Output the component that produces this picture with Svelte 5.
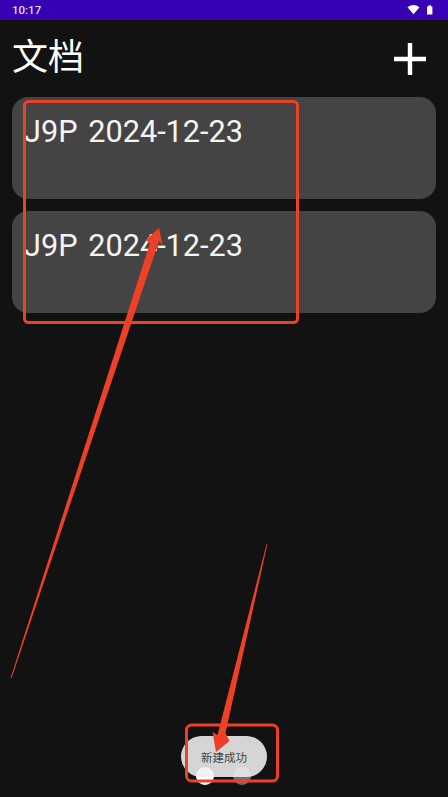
<script>
  const docs = ['J9P 2024-12-23', 'J9P 2024-12-23'];
</script>

<div class="screen">
  <div class="statusbar">
    <span class="time">10:17</span>
    <svg class="status-icons" width="30" height="12" viewBox="0 0 30 12">
      <path d="M0.5 3.2 Q6.5 -1 12.5 3.2 L6.5 10.2 Z" fill="#fff" />
      <path d="M20 2.5 h1.5 v-1.2 h2.4 v1.2 h1.5 v8 h-5.4 Z" fill="#fff" />
    </svg>
  </div>

  <header class="topbar">
    <h1>文档</h1>
    <svg class="add" width="32" height="32" viewBox="0 0 32 32">
      <path d="M13.8 0 h4.4 v13.8 h13.8 v4.4 h-13.8 v13.8 h-4.4 v-13.8 h-13.8 v-4.4 h13.8 Z" fill="#fff" />
    </svg>
  </header>

  <div class="list">
    {#each docs as doc}
      <div class="card"><span>{doc}</span></div>
    {/each}
  </div>

  <div class="dots">
    <span class="dot on"></span>
    <span class="dot"></span>
  </div>
  <div class="toast">新建成功</div>

  <svg class="marks" width="448" height="797" viewBox="0 0 448 797">
    <rect x="24.5" y="101.5" width="273" height="221" rx="4" fill="none" stroke="#ee4026" stroke-width="3" />
    <rect x="186.5" y="725" width="91" height="56" rx="5" fill="none" stroke="#ee4026" stroke-width="3" />
    <path d="M10.6 678 L150 243 L145.5 240 L159 228 L162.5 245 L159 241 L11.6 678 Z" fill="#ee4026" />
    <path d="M266.6 544 L217.5 735 L212.5 732 L216 752 L229.5 741 L225.5 733 L267.4 544 Z" fill="#ee4026" />
  </svg>
</div>

<style>
  :global(body) {
    margin: 0;
    background: #121212;
  }

  .screen {
    position: relative;
    width: 448px;
    height: 797px;
    overflow: hidden;
    background: #121212;
    font-family: Roboto, "Noto Sans CJK SC", sans-serif;
    color: #fff;
  }

  .statusbar {
    height: 20px;
    padding: 0 12px;
    display: flex;
    align-items: center;
    justify-content: space-between;
    background: #3700b3;
  }

  .time {
    font-size: 11.5px;
    font-weight: 500;
    color: #e6def5;
  }

  .status-icons {
    margin-right: -1px;
  }

  .topbar {
    height: 77px;
    padding: 0 22px 0 12px;
    display: flex;
    align-items: center;
    justify-content: space-between;
  }

  .add {
    margin-top: 1px;
  }

  h1 {
    margin: 0 0 2px;
    font-size: 36px;
    font-weight: 400;
    line-height: 40px;
  }

  .list {
    padding: 0 12px;
    display: flex;
    flex-direction: column;
    gap: 12px;
  }

  .card {
    height: 102px;
    box-sizing: border-box;
    padding: 16px 12px;
    border-radius: 16px;
    background: #444;
    font-size: 30.7px;
    font-weight: 400;
    line-height: 38px;
    word-spacing: 3px;
    white-space: nowrap;
    color: #f4f4f4;
  }

  .dots {
    position: absolute;
    left: 196px;
    top: 767px;
    display: flex;
    gap: 19px;
  }

  .dot {
    width: 18px;
    height: 18px;
    border-radius: 50%;
    background: #6e6e6e;
  }

  .dot.on {
    background: #fff;
  }

  .toast {
    position: absolute;
    left: 181px;
    top: 736px;
    width: 86px;
    height: 41px;
    display: flex;
    align-items: center;
    justify-content: center;
    border-radius: 21px;
    background: rgba(240, 240, 240, 0.88);
    color: #444;
    font-size: 11.5px;
  }

  .marks {
    position: absolute;
    left: 0;
    top: 0;
  }
</style>
